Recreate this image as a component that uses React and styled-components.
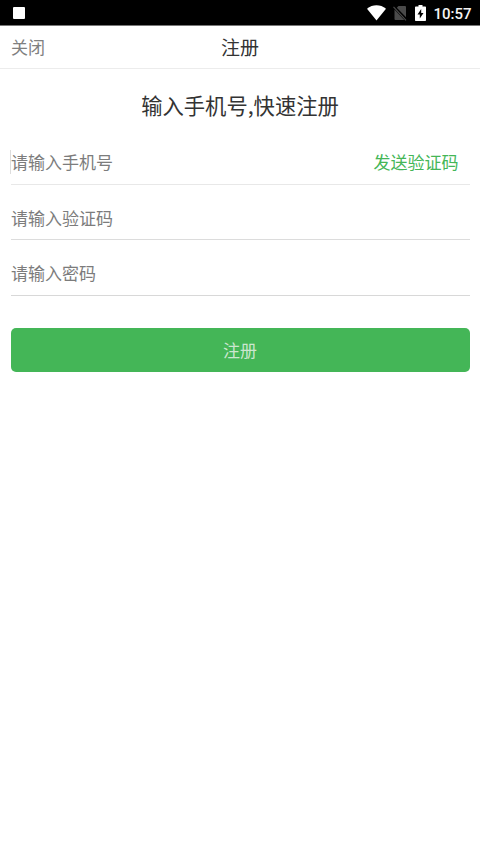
import React from 'react'
import styled, { createGlobalStyle } from 'styled-components'

const GlobalStyle = createGlobalStyle`
  * {
    box-sizing: border-box;
  }

  body {
    margin: 0;
    background: #fff;
    font-family: 'Noto Sans CJK SC', sans-serif;
  }
`

const Page = styled.div`
  min-height: 853px;
  background: #fff;
`

const StatusBar = styled.div`
  height: 26px;
  padding: 0 9px 0 13px;
  display: flex;
  align-items: center;
  background: #000;
  border-bottom: 1px solid #777;
`

const Notification = styled.div`
  width: 12px;
  height: 12px;
  border-radius: 1px;
  background: #fff;
`

const StatusIcons = styled.div`
  margin-left: auto;
  display: flex;
  align-items: center;
`

const Icon = styled.svg`
  display: block;
  margin-right: ${(props) => props.$gap}px;
`

const Clock = styled.span`
  width: 37.5px;
  padding-top: 2px;
  font-family: Roboto, sans-serif;
  font-size: 15px;
  font-weight: 500;
  line-height: 24px;
  color: #f4f4f4;
`

const NavBar = styled.header`
  height: 43px;
  padding: 0 11px;
  display: grid;
  grid-template-columns: 1fr auto 1fr;
  align-items: center;
  border-bottom: 1px solid #ececec;
`

const CloseButton = styled.button`
  justify-self: start;
  padding: 0;
  border: 0;
  background: none;
  font-family: inherit;
  font-size: 17px;
  line-height: 24px;
  color: #808080;
`

const NavTitle = styled.h1`
  margin: 0;
  font-size: 19px;
  font-weight: 400;
  line-height: 28px;
  color: #333;
`

const Form = styled.form`
  padding: 20px 10.5px 0;
`

const Heading = styled.h2`
  margin: 0 0 21px;
  text-align: center;
  font-size: 21.3px;
  font-weight: 400;
  line-height: 32px;
  color: #333;
`

const Field = styled.div`
  height: ${(props) => props.$height}px;
  padding-top: ${(props) => props.$top}px;
  display: flex;
  align-items: flex-start;
  border-bottom: 1px solid ${(props) => props.$line};
`

const Input = styled.input`
  flex: 1;
  min-width: 0;
  height: 24px;
  padding: 0 0 0 0.5px;
  border: 0;
  outline: 0;
  background: none;
  font-family: inherit;
  font-size: 17px;
  line-height: 24px;

  &::placeholder {
    color: #7c7c7c;
    opacity: 1;
  }
`

const Caret = styled.span`
  width: 1px;
  height: 24px;
  margin-left: -1px;
  background: #ddd;
`

const SendCode = styled.button`
  margin-right: 11px;
  padding: 0;
  border: 0;
  background: none;
  font-family: inherit;
  font-size: 17px;
  line-height: 24px;
  color: #44b657;
`

const Submit = styled.button`
  display: block;
  width: 100%;
  height: 44px;
  margin-top: 32px;
  padding: 0;
  border: 0;
  border-radius: 5px;
  background: #44b657;
  font-family: inherit;
  font-size: 17px;
  line-height: 44px;
  color: #cbe6cf;
`

const WifiIcon = () => (
  <Icon $gap={7} width="19" height="16" viewBox="0 0 19 16">
    <path d="M0 3.7C5.6-.8 13.4-.8 19 3.7L9.5 15.5z" fill="#fff" />
  </Icon>
)

const NoSimIcon = () => (
  <Icon $gap={8} width="14" height="16" viewBox="0 0 14 16">
    <path d="M5.5 1H12q1 0 1 1v10.200L3.800 2.700z" fill="#4a4a4a" />
    <path d="M1.500 4.500L11.300 15H2.500q-1 0-1-1z" fill="#4a4a4a" />
    <path d="M.5 1.800L13 15.300" stroke="#4a4a4a" strokeWidth="1.200" />
  </Icon>
)

const BatteryIcon = () => (
  <Icon $gap={7.5} width="11" height="16" viewBox="0 0 11 16">
    <path
      d="M3.500 0h4v1.500H10c.6 0 1 .4 1 1V15c0 .6-.4 1-1 1H1c-.6 0-1-.4-1-1V2.500c0-.6.4-1 1-1h2.500z"
      fill="#fff"
    />
    <path d="M6.200 4v4h2.300l-3.700 5.500V9.500H2.500z" fill="#000" />
  </Icon>
)

const App = () => {
  return (
    <Page>
      <GlobalStyle />
      <StatusBar>
        <Notification />
        <StatusIcons>
          <WifiIcon />
          <NoSimIcon />
          <BatteryIcon />
          <Clock>10:57</Clock>
        </StatusIcons>
      </StatusBar>
      <NavBar>
        <CloseButton type="button">关闭</CloseButton>
        <NavTitle>注册</NavTitle>
      </NavBar>
      <Form>
        <Heading>输入手机号,快速注册</Heading>
        <Field $height={43} $top={8} $line="#e8e8e8">
          <Caret />
          <Input type="tel" placeholder="请输入手机号" />
          <SendCode type="button">发送验证码</SendCode>
        </Field>
        <Field $height={55} $top={21} $line="#dcdcdc">
          <Input type="text" placeholder="请输入验证码" />
        </Field>
        <Field $height={56} $top={21} $line="#d8d8d8">
          <Input type="password" placeholder="请输入密码" />
        </Field>
        <Submit type="submit">注册</Submit>
      </Form>
    </Page>
  )
}

export default App
